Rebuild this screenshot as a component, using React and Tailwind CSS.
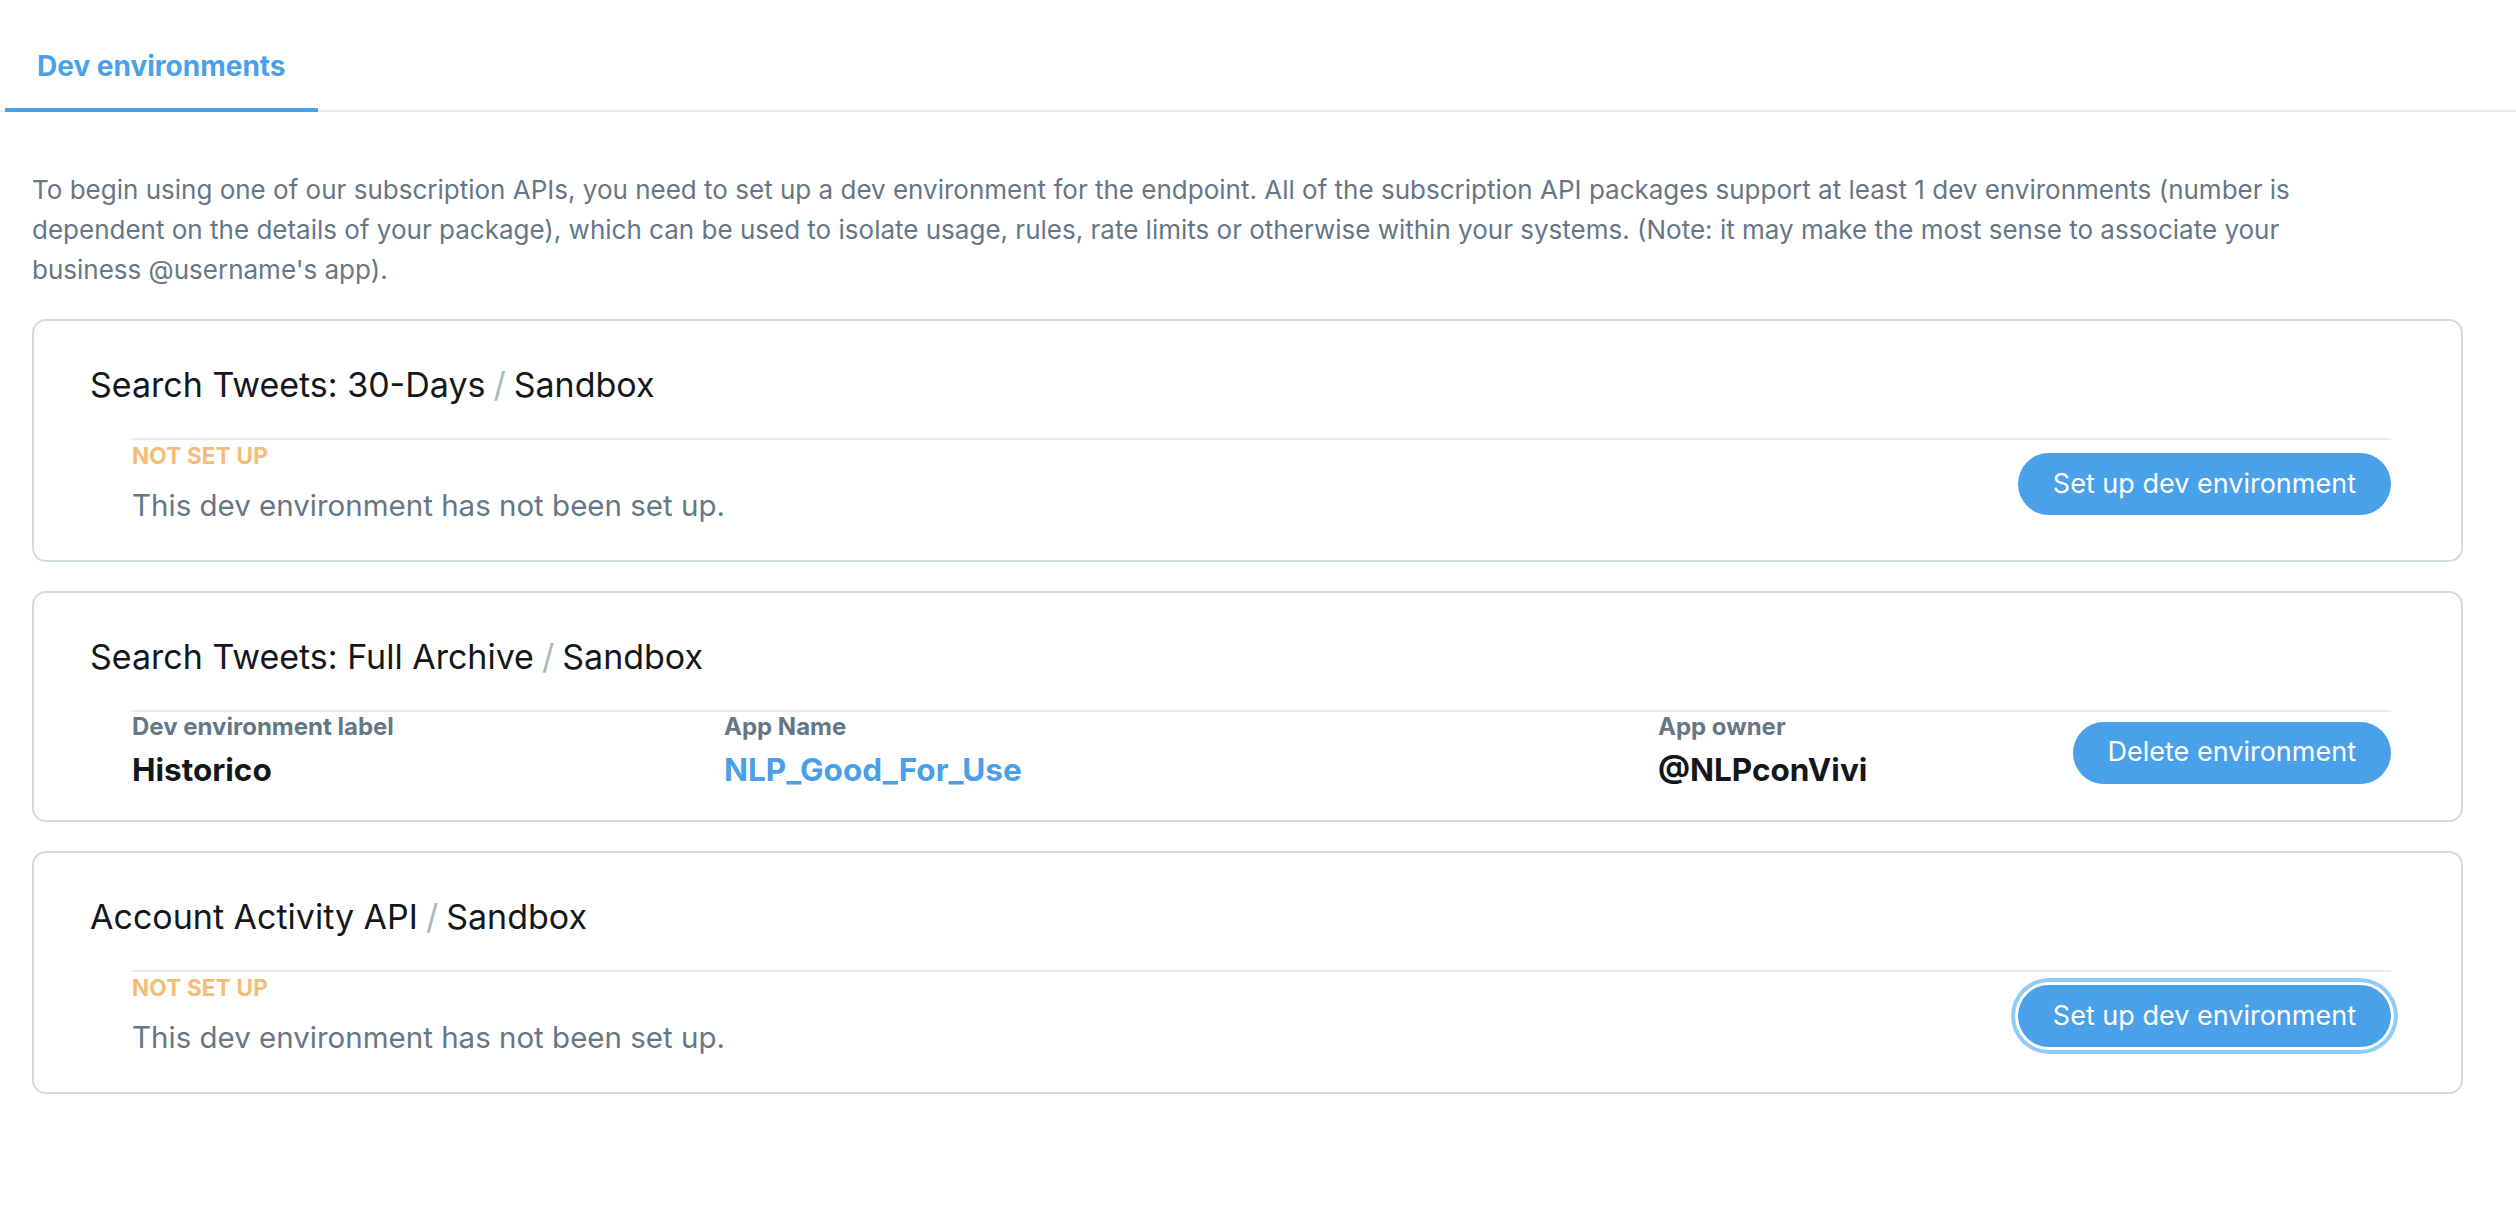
import React from "react";

function Title({ name }) {
  return (
    <div className="text-[34px] leading-[44px] text-[#14171a] pl-[56px]">
      {name}
      <span className="text-[#aab8c2] mx-[8px]">/</span>
      Sandbox
    </div>
  );
}

function NotSetUpCard({ name, focused }) {
  return (
    <div className="border-2 border-[#d3dbe2] rounded-[14px] pt-[42px] pb-[35px] pr-[70px]">
      <Title name={name} />
      <div className="ml-[98px] mt-[31px] border-t-2 border-[#e6ecf0] pt-[3px] flex items-center justify-between">
        <div>
          <div className="text-[22.5px] leading-[26px] font-bold text-[#f6bb78] tracking-[0.2px]">NOT SET UP</div>
          <div className="mt-[16px] text-[29.5px] leading-[40px] text-[#657786]">
            This dev environment has not been set up.
          </div>
        </div>
        <button
          className={
            focused
              ? "h-[62px] px-[35px] rounded-full bg-[#4aa1ea] text-white text-[27px] ring-[4px] ring-[#8ecdf7] ring-offset-[3px] ring-offset-white"
              : "h-[62px] px-[35px] rounded-full bg-[#4aa1ea] text-white text-[27px]"
          }
        >
          Set up dev environment
        </button>
      </div>
    </div>
  );
}

function ArchiveCard() {
  return (
    <div className="border-2 border-[#d3dbe2] rounded-[14px] pt-[42px] pb-[30px] pr-[70px]">
      <Title name="Search Tweets: Full Archive" />
      <div className="ml-[98px] mt-[31px] border-t-2 border-[#e6ecf0] pt-[3px] flex items-center">
        <div className="w-[592px]">
          <div className="text-[24px] leading-[24px] font-bold text-[#657786]">Dev environment label</div>
          <div className="mt-[11px] text-[31.5px] leading-[40px] font-bold text-[#14171a]">Historico</div>
        </div>
        <div className="w-[934px]">
          <div className="text-[24px] leading-[24px] font-bold text-[#657786]">App Name</div>
          <div className="mt-[11px] text-[31.5px] leading-[40px] font-bold text-[#4a9fe8]">NLP_Good_For_Use</div>
        </div>
        <div className="flex-1">
          <div className="text-[24px] leading-[24px] font-bold text-[#657786]">App owner</div>
          <div className="mt-[11px] text-[31.5px] leading-[40px] font-bold text-[#14171a]">@NLPconVivi</div>
        </div>
        <button className="h-[62px] px-[35px] rounded-full bg-[#4aa1ea] text-white text-[27px]">
          Delete environment
        </button>
      </div>
    </div>
  );
}

export default function App() {
  return (
    <div className="min-h-[1208px] bg-white font-['Inter','Liberation_Sans',sans-serif]">
      <div className="border-b-2 border-[#e6ecf0] pl-[5px] flex">
        <div className="pt-[50px] pb-[26px] px-[32px] border-b-4 border-[#4aa1ea] -mb-[2px] text-[28px] leading-[32px] font-bold text-[#4aa1ea]">
          Dev environments
        </div>
      </div>
      <div className="pl-[32px] pr-[53px]">
        <p className="mt-[58px] text-[26px] leading-[40px] text-[#657786]">
          To begin using one of our subscription APIs, you need to set up a dev environment for the endpoint. All of the subscription API packages support at least 1 dev environments (number is
          <br />
          dependent on the details of your package), which can be used to isolate usage, rules, rate limits or otherwise within your systems. (Note: it may make the most sense to associate your
          <br />
          business @username's app).
        </p>
        <div className="mt-[29px] flex flex-col gap-[29px]">
          <NotSetUpCard name="Search Tweets: 30-Days" />
          <ArchiveCard />
          <NotSetUpCard name="Account Activity API" focused />
        </div>
      </div>
    </div>
  );
}
